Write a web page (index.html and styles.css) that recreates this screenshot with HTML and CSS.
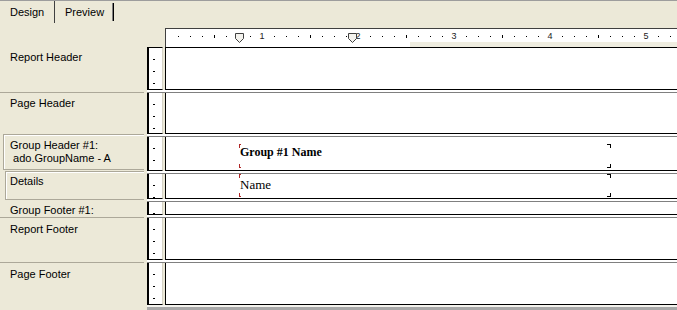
FILE: index.html
```html
<!DOCTYPE html>
<html>
<head>
<meta charset="utf-8">
<link rel="stylesheet" href="styles.css">
</head>
<body>
<div class="app">
  <div class="tabs">
    <div class="tab active">Design</div>
    <div class="tab">Preview</div>
  </div>
  <div class="ruler-row">
    <div class="ruler">
      <div class="ruler-nums">
        <span><i>1</i></span><span><i>2</i></span><span><i>3</i></span><span><i>4</i></span><span><i>5</i></span>
      </div>
      <svg class="marker m1" width="10" height="11" viewBox="0 0 10 11"><polygon points="0.5,0.5 8.5,0.5 8.5,5.5 4.5,9.5 0.5,5.5" fill="#f4f3ee" stroke="#404040"/></svg>
      <svg class="marker m2" width="10" height="11" viewBox="0 0 10 11"><polygon points="0.5,0.5 8.5,0.5 8.5,5.5 4.5,9.5 0.5,5.5" fill="#f4f3ee" stroke="#404040"/></svg>
    </div>
  </div>
  <div class="sections">
    <div class="section rh">
      <div class="label sep">Report Header</div>
      <div class="vruler"></div>
      <div class="canvas"></div>
      <div class="split"></div>
    </div>
    <div class="section ph">
      <div class="label">Page Header</div>
      <div class="vruler"></div>
      <div class="canvas"></div>
      <div class="split"></div>
    </div>
    <div class="section gh">
      <div class="label boxed">Group Header #1:<br>&nbsp;ado.GroupName - A</div>
      <div class="vruler"></div>
      <div class="canvas">
        <div class="field bold">Group #1 Name<span class="c tl"></span><span class="c bl"></span><span class="c tr"></span><span class="c br"></span></div>
      </div>
      <div class="split"></div>
    </div>
    <div class="section dt">
      <div class="label boxed inner">Details</div>
      <div class="vruler"></div>
      <div class="canvas">
        <div class="field">Name<span class="c tl"></span><span class="c bl"></span><span class="c tr"></span><span class="c br"></span></div>
      </div>
      <div class="split"></div>
    </div>
    <div class="section gf">
      <div class="label sep">Group Footer #1:</div>
      <div class="vruler"></div>
      <div class="canvas"></div>
      <div class="split"></div>
    </div>
    <div class="section rf">
      <div class="label sep">Report Footer</div>
      <div class="vruler"></div>
      <div class="canvas"></div>
      <div class="split"></div>
    </div>
    <div class="section pf">
      <div class="label">Page Footer</div>
      <div class="vruler"></div>
      <div class="canvas"></div>
      <div class="split last"></div>
    </div>
  </div>
</div>
</body>
</html>
```
FILE: styles.css
```css
* { box-sizing: border-box; }
html, body { margin: 0; padding: 0; }
body {
  background: #ece9d8;
  font-family: "Liberation Sans", Arial, sans-serif;
  font-size: 11px;
  color: #000;
  width: 677px;
  height: 310px;
  overflow: hidden;
}
.app { width: 677px; }

.tabs {
  height: 23px;
  border-top: 1px solid #9d9d9d;
  display: flex;
  align-items: flex-start;
}
.tab {
  height: 22px;
  line-height: 13px;
  padding: 5px 0 0 10px;
}
.tab.active {
  width: 55px;
  border-right: 1px solid #404040;
  padding-top: 5px;
}
.tab:not(.active) {
  width: 59px;
  height: 18px;
  margin-top: 2px;
  padding-top: 3px;
  border-right: 1px solid #000;
  box-shadow: inset -1px 0 #808080;
}

.ruler-row {
  padding: 5px 0 0 165px;
  height: 24px;
}
.ruler {
  position: relative;
  height: 19px;
  border-top: 1px solid #404040;
  border-left: 1px solid #404040;
  background:
    repeating-linear-gradient(to right, transparent 0 47px, #000 47px 48px, transparent 48px 96px) 1px 6px / 100% 3px no-repeat,
    repeating-linear-gradient(to right, transparent 0 11px, #000 11px 12px) 1px 7px / 100% 1px no-repeat,
    linear-gradient(#efede0, #efede0) 244px 13px / 100% 5px no-repeat,
    #fff;
}
.ruler-nums {
  display: flex;
  padding: 1px 0 0 48px;
  line-height: 12px;
  font-size: 9px;
  color: #222;
}
.ruler-nums span {
  flex: 0 0 96px;
  text-align: center;
}
.ruler-nums i {
  font-style: normal;
  background: #fff;
  padding: 0 1px;
}
.marker { position: absolute; top: 4px; }
.m1 { left: 69px; }
.m2 { left: 182px; }

.section {
  display: grid;
  grid-template-columns: 147px 16px 2px 1fr;
  grid-template-rows: var(--h) 3px;
}
.rh { --h: 43px; }
.ph { --h: 41px; }
.gh { --h: 34px; }
.dt { --h: 25px; }
.gf { --h: 13px; }
.rf { --h: 42px; }
.pf { --h: 42px; grid-template-rows: var(--h) 6px; }

.label {
  grid-column: 1;
  grid-row: 1 / 3;
  width: 144px;
  padding: 4px 0 0 10px;
  line-height: 13px;
  white-space: nowrap;
}
.label.sep {
  border-bottom: 1px solid #aca899;
}
.gf .label { padding-top: 2px; }
.rf .label, .pf .label { padding-top: 5px; }
.label.boxed {
  margin: -3px 0 0 3px;
  width: 141px;
  height: 36px;
  padding: 4px 0 0 6px;
  border: 1px solid #aca899;
  border-right: 0;
  box-shadow: inset 1px 1px #fff;
}
.label.inner {
  margin: -3px 0 0 5px;
  width: 139px;
  height: 29px;
  padding: 3px 0 0 4px;
}

.vruler {
  grid-column: 2;
  grid-row: 1;
  border-left: 2px solid #000;
  border-right: 1px solid #d6d3c6;
  border-bottom: 1px solid #000;
  background: linear-gradient(to bottom, transparent 0 11px, #000 11px 12px) 4px 0 / 2px 12px repeat-y, #fff;
}
.canvas {
  grid-column: 4;
  grid-row: 1;
  background: #fff;
  border-left: 1px solid #000;
  border-bottom: 1px solid #000;
}
.rh .vruler, .rh .canvas { border-top: 1px solid #000; }
.split {
  grid-column: 2 / 5;
  grid-row: 2;
  background: linear-gradient(#fff 0 2px, #808080 2px 3px);
}
.split.last {
  background: linear-gradient(#f4f3ee 0 2px, #a8a8a8 2px);
}

.field {
  position: relative;
  margin-left: 73px;
  width: 372px;
  font-family: "Liberation Serif", "Times New Roman", serif;
  white-space: nowrap;
}
.gh .field {
  margin-top: 7px;
  height: 24px;
  padding: 1px 0 0 1px;
  font-size: 12px;
  line-height: 14px;
  font-weight: bold;
}
.dt .field {
  height: 23px;
  padding: 3px 0 0 1px;
  font-size: 13px;
  line-height: 15px;
}
.c { position: absolute; width: 4px; height: 4px; }
.tl { left: 0; top: 0; width: 2px; border-left: 1px solid #b02828; border-top: 1px solid #b02828; }
.bl { left: 0; bottom: 0; width: 2px; border-left: 1px solid #b02828; border-bottom: 1px solid #b02828; }
.tr { right: 0; top: 0; border-right: 1px solid #000; border-top: 1px solid #000; }
.br { right: 0; bottom: 0; border-right: 1px solid #000; border-bottom: 1px solid #000; }
```
